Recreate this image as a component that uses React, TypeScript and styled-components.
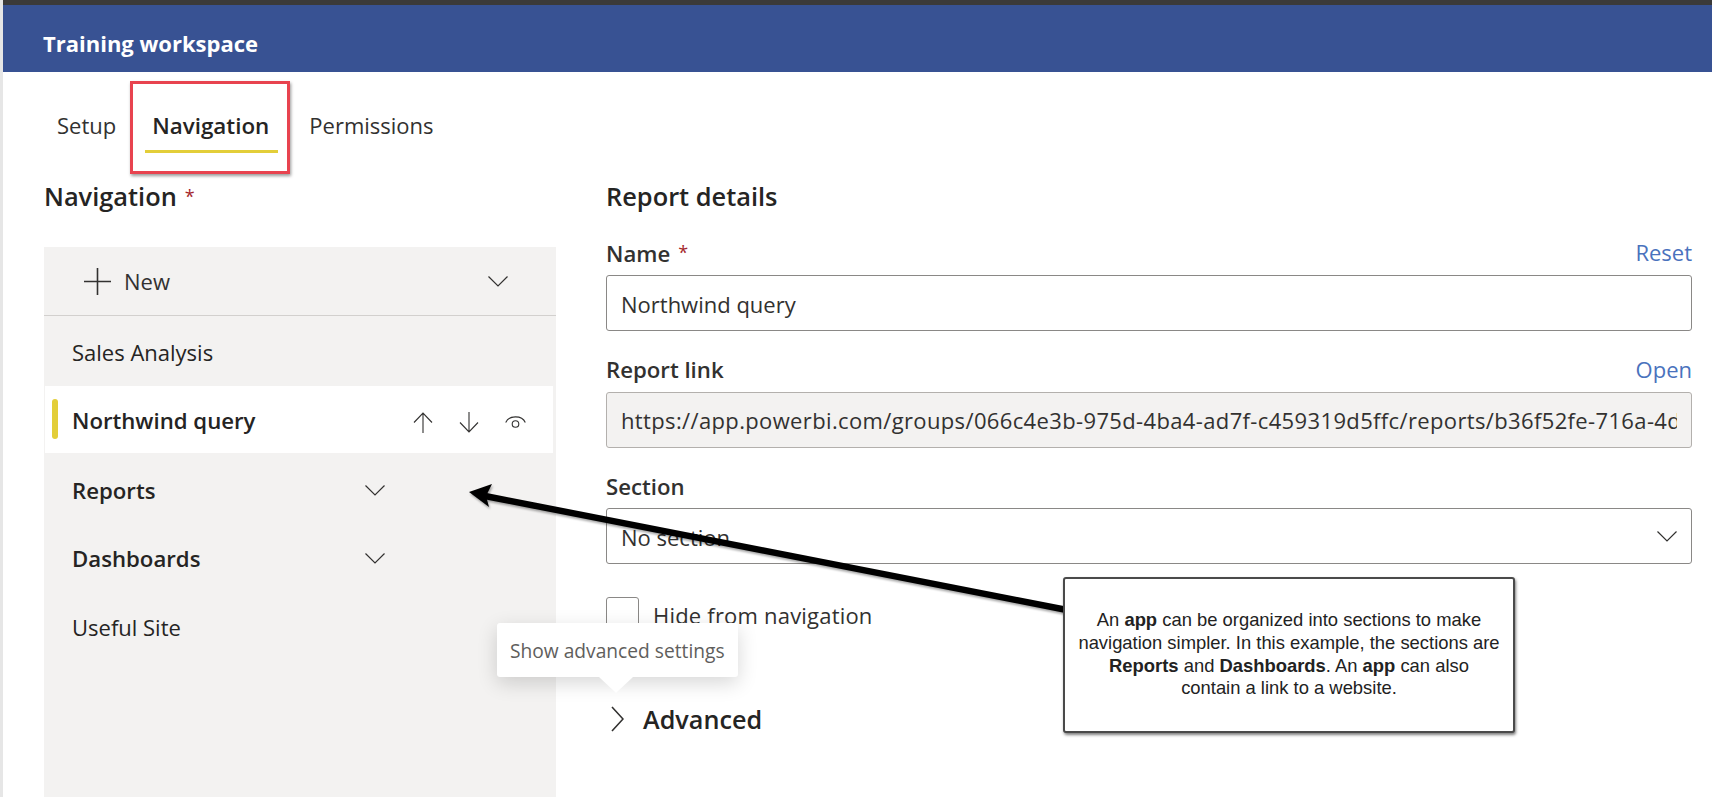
import React from "react";
import styled, { createGlobalStyle } from "styled-components";

const Global = createGlobalStyle`
  html, body { margin: 0; padding: 0; background: #fff; }
  body { font-family: "Open Sans", "Noto Sans", sans-serif; color: #252423; overflow: hidden; }
  * { box-sizing: border-box; }
`;

const Page = styled.div`
  position: relative;
  width: 1712px;
  height: 797px;
  overflow: hidden;
  background: #fff;
  border-left: 3px solid #e6e6e6;
`;
const TopStrip = styled.div`
  height: 5px;
  margin-left: -3px;
  background: #3b3a39;
`;
const Header = styled.header`
  height: 67px;
  background: #385293;
  display: flex;
  align-items: center;
  padding: 8px 0 0 40px;
  color: #fff;
  font-size: 22px;
  font-weight: 700;
`;
const Tabs = styled.nav`
  display: flex;
  height: 81px;
  padding: 38px 0 0 47px;
`;
const Tab = styled.div<{ $active?: boolean }>`
  position: relative;
  height: 43px;
  padding: ${(p) => (p.$active ? "0 9px 0 7px" : "0 7px")};
  margin-right: ${(p) => (p.$active ? "24px" : "22px")};
  font-size: ${(p) => (p.$active ? "22.4px" : "22px")};
  line-height: ${(p) => (p.$active ? "32px" : "31px")};
  font-weight: ${(p) => (p.$active ? 600 : 400)};
  color: ${(p) => (p.$active ? "#252423" : "#323130")};
  white-space: nowrap;
  border-bottom: 3px solid ${(p) => (p.$active ? "#e3ce39" : "transparent")};
`;
const RedBox = styled.span`
  position: absolute;
  left: -15px;
  top: -29px;
  right: -12px;
  bottom: -24px;
  border: 3px solid #e8434f;
  box-shadow: 1px 2px 3px rgba(0, 0, 0, 0.4);
  pointer-events: none;
`;
const Columns = styled.main`
  display: flex;
  padding: 26px 20px 0 41px;
`;
const LeftCol = styled.section`
  width: 512px;
  flex: none;
  margin-right: 50px;
`;
const RightCol = styled.section`
  flex: 1;
  min-width: 0;
  display: flex;
  flex-direction: column;
`;
const Heading = styled.h2`
  margin: 0;
  height: 35px;
  font-size: 25.4px;
  line-height: 34px;
  font-weight: 600;
  color: #252423;
`;
const Star = styled.span`
  color: #a4262c;
  font-weight: 400;
  margin-left: 8px;
  font-size: 18px;
  vertical-align: 3px;
`;
const Panel = styled.div`
  margin-top: 33px;
  height: 550px;
  background: #f3f2f1;
`;
const NewRow = styled.div`
  height: 69px;
  border-bottom: 1px solid #d2d0ce;
  display: flex;
  align-items: center;
  padding: 0 48px 0 40px;
  margin-bottom: 2px;
  font-size: 22px;
  color: #323130;
`;
const NewLabel = styled.span`
  margin-left: 13px;
  flex: 1;
`;
const NavRow = styled.div<{ $active?: boolean; $strong?: boolean }>`
  position: relative;
  display: flex;
  align-items: center;
  height: ${(p) => (p.$active ? "67px" : "68px")};
  margin: ${(p) => (p.$active ? "0 3px 4px 1px" : "0")};
  padding: ${(p) => (p.$active ? "1px 0 0 27px" : "0 0 1px 28px")};
  background: ${(p) => (p.$active ? "#fff" : "transparent")};
  font-size: ${(p) => (p.$strong ? "22.2px" : "22px")};
  font-weight: ${(p) => (p.$strong ? 600 : 400)};
  color: #252423;
`;
const RowLabel = styled.span`
  width: 293px;
  flex: none;
`;
const ActiveBar = styled.span`
  position: absolute;
  left: 7px;
  top: 13px;
  width: 6px;
  height: 40px;
  border-radius: 3px;
  background: #e3ce39;
`;
const RowTools = styled.span`
  display: flex;
  align-items: center;
  margin-left: 48px;
  padding-top: 4px;
  gap: 26px;
`;
const Field = styled.div`
  margin-top: 24px;
  & + & {
    margin-top: 23.5px;
  }
`;
const LabelRow = styled.div`
  display: flex;
  justify-content: space-between;
  align-items: center;
  height: 32px;
  padding-bottom: 2px;
  margin-bottom: 5px;
`;
const Label = styled.label`
  font-size: 22.2px;
  font-weight: 600;
  color: #323130;
`;
const Link = styled.a`
  font-size: 22px;
  color: #4a72bd;
  margin-bottom: 2px;
`;
const Box = styled.div<{ $disabled?: boolean }>`
  display: flex;
  align-items: center;
  justify-content: space-between;
  height: 56px;
  padding: 1px 14px 0 14px;
  border: 1.5px solid ${(p) => (p.$disabled ? "#b3b0ad" : "#8a8886")};
  border-radius: 3px;
  background: ${(p) => (p.$disabled ? "#f3f2f1" : "#fff")};
  font-size: 22px;
  letter-spacing: ${(p) => (p.$disabled ? "0.36px" : "0")};
  color: #323130;
  white-space: nowrap;
  overflow: hidden;
`;
const Clip = styled.span`
  display: block;
  overflow: hidden;
  flex: 1;
`;
const CheckRow = styled.div`
  display: flex;
  align-items: center;
  height: 36px;
  margin-top: 33px;
  font-size: 22px;
  letter-spacing: 0.2px;
  color: #323130;
`;
const Check = styled.span`
  width: 33px;
  height: 36px;
  margin-right: 14px;
  border: 1.5px solid #8a8886;
  border-radius: 3px;
  background: #fff;
`;
const AdvancedRow = styled.div`
  display: flex;
  align-items: center;
  height: 36px;
  margin-top: 68px;
  padding-left: 5px;
  font-size: 25.2px;
  font-weight: 600;
  color: #252423;
`;
const AdvancedLabel = styled.span`
  margin-left: 19px;
`;
const Tooltip = styled.div`
  position: absolute;
  left: 494px;
  top: 623px;
  width: 241px;
  height: 54px;
  padding-left: 13px;
  display: flex;
  align-items: center;
  background: #fff;
  border-radius: 3px;
  box-shadow: 0 6px 20px rgba(0, 0, 0, 0.16);
  color: #605e5c;
  font-size: 19.2px;
  white-space: nowrap;
  &::after {
    content: "";
    position: absolute;
    left: 102px;
    top: 54px;
    border-left: 17px solid transparent;
    border-right: 17px solid transparent;
    border-top: 16px solid #fff;
  }
`;
const Callout = styled.aside`
  position: absolute;
  left: 1060px;
  top: 577px;
  width: 452px;
  height: 156px;
  padding: 0 4px 1px;
  display: flex;
  align-items: center;
  justify-content: center;
  text-align: center;
  background: #fff;
  border: 2px solid #4a4a4a;
  border-radius: 3px;
  box-shadow: 1px 2px 3px rgba(0, 0, 0, 0.5);
  font-family: "Liberation Sans", Arial, sans-serif;
  font-size: 18.4px;
  line-height: 22.6px;
  color: #222;
`;
const ArrowSvg = styled.svg`
  position: absolute;
  left: 460px;
  top: 480px;
  filter: drop-shadow(1px 2px 1px rgba(0, 0, 0, 0.35));
  pointer-events: none;
`;

const Line = ({ w, h, d, sw = 1.4, color = "#323130" }: { w: number; h: number; d: string; sw?: number; color?: string }) => (
  <svg width={w} height={h} viewBox={`0 0 ${w} ${h}`} fill="none" stroke={color} strokeWidth={sw} style={{ flex: "none" }}>
    <path d={d} />
  </svg>
);
const Chevron = () => <Line w={20} h={11} d="M0.5 0.5 L10 10 L19.5 0.5" sw={1.2} />;
const Plus = () => <Line w={27} h={27} d="M13.5 0 V27 M0 13.5 H27" sw={1.6} />;
const Up = () => <Line w={20} h={21} d="M10 21 V1 M1 10.5 L10 1 L19 10.5" sw={1.1} />;
const Down = () => <Line w={20} h={21} d="M10 0 V20 M1 10.5 L10 20 L19 10.5" sw={1.1} />;
const Eye = () => (
  <svg width={21} height={14} viewBox="0 0 21 14" fill="none" stroke="#323130" strokeWidth={1.1} style={{ flex: "none" }}>
    <path d="M0.7 7.5 C4 0 17 0 20.3 7.5" />
    <circle cx={10.5} cy={9} r={3.3} />
  </svg>
);

export default function App() {
  return (
    <Page>
      <Global />
      <TopStrip />
      <Header>Training workspace</Header>
      <Tabs>
        <Tab>Setup</Tab>
        <Tab $active>
          Navigation
          <RedBox />
        </Tab>
        <Tab>Permissions</Tab>
      </Tabs>
      <Columns>
        <LeftCol>
          <Heading>
            Navigation<Star>*</Star>
          </Heading>
          <Panel>
            <NewRow>
              <Plus />
              <NewLabel>New</NewLabel>
              <Chevron />
            </NewRow>
            <NavRow>Sales Analysis</NavRow>
            <NavRow $active $strong>
              <ActiveBar />
              <RowLabel>Northwind query</RowLabel>
              <RowTools>
                <Up />
                <Down />
                <Eye />
              </RowTools>
            </NavRow>
            <NavRow $strong>
              <RowLabel>Reports</RowLabel>
              <Chevron />
            </NavRow>
            <NavRow $strong>
              <RowLabel>Dashboards</RowLabel>
              <Chevron />
            </NavRow>
            <NavRow>Useful Site</NavRow>
          </Panel>
        </LeftCol>
        <RightCol>
          <Heading>Report details</Heading>
          <Field>
            <LabelRow>
              <Label>
                Name<Star>*</Star>
              </Label>
              <Link>Reset</Link>
            </LabelRow>
            <Box>Northwind query</Box>
          </Field>
          <Field>
            <LabelRow>
              <Label>Report link</Label>
              <Link>Open</Link>
            </LabelRow>
            <Box $disabled>
              <Clip>https://app.powerbi.com/groups/066c4e3b-975d-4ba4-ad7f-c459319d5ffc/reports/b36f52fe-716a-4d3c-9e21</Clip>
            </Box>
          </Field>
          <Field>
            <LabelRow>
              <Label>Section</Label>
            </LabelRow>
            <Box>
              No section
              <Chevron />
            </Box>
          </Field>
          <CheckRow>
            <Check />
            Hide from navigation
          </CheckRow>
          <AdvancedRow>
            <Line w={13} h={26} d="M1 1 L12 13 L1 25" sw={1.6} />
            <AdvancedLabel>Advanced</AdvancedLabel>
          </AdvancedRow>
        </RightCol>
      </Columns>
      <ArrowSvg width={610} height={140} viewBox="460 480 610 140">
        <path d="M482 496 L1064 610" stroke="#000" strokeWidth={6.5} fill="none" />
        <polygon points="466,492 489,484 483,496 486,507" fill="#000" />
      </ArrowSvg>
      <Tooltip>Show advanced settings</Tooltip>
      <Callout>
        <div>
          An <b>app</b> can be organized into sections to make
          <br />
          navigation simpler. In this example, the sections are
          <br />
          <b>Reports</b> and <b>Dashboards</b>. An <b>app</b> can also
          <br />
          contain a link to a website.
        </div>
      </Callout>
    </Page>
  );
}
